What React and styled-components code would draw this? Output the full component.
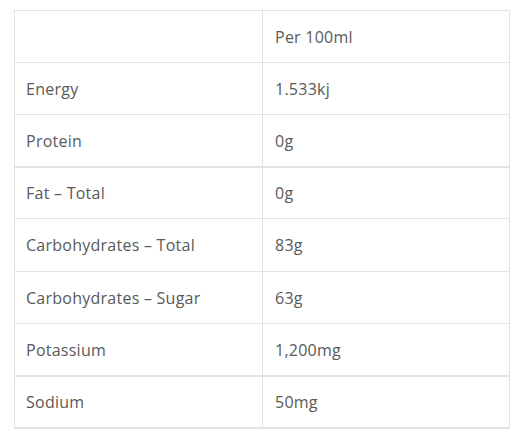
import React from "react";
import styled, { createGlobalStyle } from "styled-components";

const GlobalStyle = createGlobalStyle`
  body {
    margin: 0;
    background: #fff;
    font-family: "Open Sans", "Liberation Sans", sans-serif;
  }
`;

const Page = styled.div`
  padding: 10px 16px 14px 14px;
`;

const Table = styled.div`
  width: 496px;
  border: 1px solid #e2e2e2;
  border-bottom-width: 2px;
  box-sizing: border-box;
`;

const Row = styled.div`
  display: grid;
  grid-template-columns: 247px 1fr;
  height: ${(p) => p.$h}px;
  box-sizing: border-box;
  border-top: ${(p) => (p.$thick ? "2px" : "1px")} solid #e2e2e2;

  &:first-child {
    border-top: none;
  }
`;

const Cell = styled.div`
  display: flex;
  align-items: center;
  padding-left: ${(p) => 11 + (p.$shift || 0)}px;
  font-size: 16px;
  color: #595959;
  letter-spacing: 0.25px;

  & + & {
    border-left: 1px solid #e2e2e2;
    padding-left: ${(p) => 13 + (p.$shift || 0)}px;
  }
`;

const rows = [
  ["", "Per 100ml", 0, false, 51],
  ["Energy", "1.533kj", 2, false, 52],
  ["Protein", "0g", 3, false, 52],
  ["Fat – Total", "0g", 3, true, 52],
  ["Carbohydrates – Total", "83g", 3, false, 53],
  ["Carbohydrates – Sugar", "63g", -1, false, 52],
  ["Potassium", "1,200mg", 3, false, 52],
  ["Sodium", "50mg", 2, true, 52],
];

export default function App() {
  return (
    <>
      <GlobalStyle />
      <Page>
        <Table>
          {rows.map(([label, value, shift, thick, h], i) => (
            <Row key={i} $thick={thick} $h={h}>
              <Cell>{label}</Cell>
              <Cell $shift={shift}>{value}</Cell>
            </Row>
          ))}
        </Table>
      </Page>
    </>
  );
}
